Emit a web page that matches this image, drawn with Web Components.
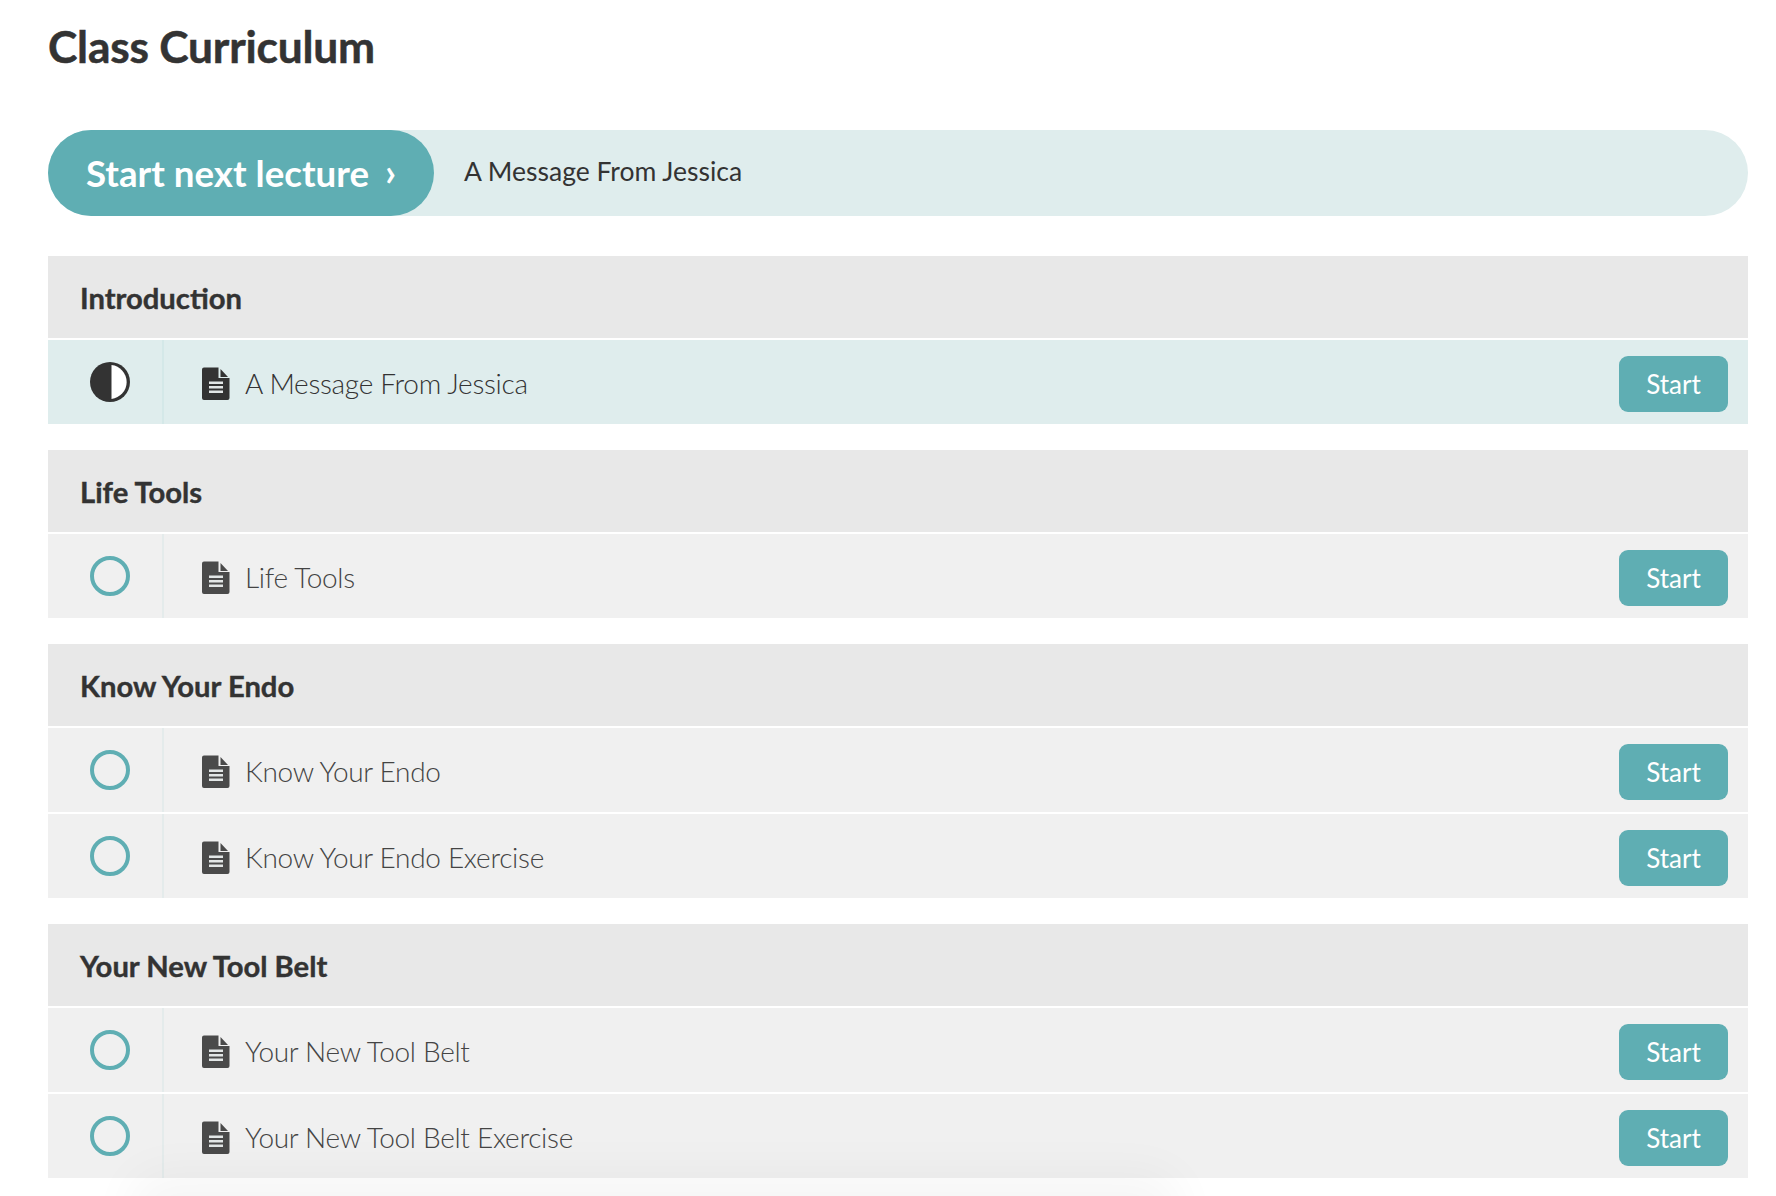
<!DOCTYPE html>
<html>
<head>
<meta charset="utf-8">
<title>Class Curriculum</title>
<style>
  html, body { margin: 0; background: #fff; }
  body { font-family: "Lato", "Noto Sans", sans-serif; color: #333; height: 1196px; overflow: hidden; }
</style>
</head>
<body>
<class-curriculum>
  <span slot="title">Class Curriculum</span>
  <next-lecture>A Message From Jessica</next-lecture>
  <curriculum-section heading="Introduction">
    <lecture-row state="current">A Message From Jessica</lecture-row>
  </curriculum-section>
  <curriculum-section heading="Life Tools">
    <lecture-row>Life Tools</lecture-row>
  </curriculum-section>
  <curriculum-section heading="Know Your Endo">
    <lecture-row>Know Your Endo</lecture-row>
    <lecture-row>Know Your Endo Exercise</lecture-row>
  </curriculum-section>
  <curriculum-section heading="Your New Tool Belt">
    <lecture-row>Your New Tool Belt</lecture-row>
    <lecture-row>Your New Tool Belt Exercise</lecture-row>
  </curriculum-section>
</class-curriculum>

<script>
class ClassCurriculum extends HTMLElement {
  constructor() {
    super();
    this.shadowDOM = this.attachShadow({ mode: 'open' });
  }

  connectedCallback() {
    this.shadowDOM.innerHTML = `
      <style>
        :host { display: block; position: relative; padding: 0 28px 0 48px; height: 1196px; box-sizing: border-box; overflow: hidden; }
        h1 { margin: 0; padding-top: 21px; height: 130px; box-sizing: border-box; font-size: 44.300px; line-height: 50px; font-weight: 700; color: #333; letter-spacing: -0.2px; -webkit-text-stroke: .5px #333; }
        .glow { position: absolute; left: 130px; width: 1050px; top: 1172px; height: 120px; background: #000; opacity: .035; filter: blur(24px); border-radius: 30px; pointer-events: none; }
      </style>
      <h1><slot name="title"></slot></h1>
      <slot></slot>
      <div class="glow"></div>
    `;
  }
}

class NextLecture extends HTMLElement {
  constructor() {
    super();
    this.shadowDOM = this.attachShadow({ mode: 'open' });
  }

  connectedCallback() {
    this.shadowDOM.innerHTML = `
      <style>
        :host { display: flex; align-items: center; height: 86px; border-radius: 43px; background: #dfeded; margin-bottom: 40px; }
        .go { display: flex; align-items: center; justify-content: space-between; box-sizing: border-box; width: 386px; height: 86px; padding: 0 38px; border-radius: 43px; background: #5faeb3; color: #fff; font-size: 36.700px; font-weight: 700; }
        .chev { position: relative; top: -2px; font-size: 38px; }
        .name { padding-left: 30px; font-size: 26.500px; color: #333; position: relative; top: -2px; }
      </style>
      <div class="go"><span>Start next lecture</span><span class="chev">›</span></div>
      <div class="name"><slot></slot></div>
    `;
  }
}

class CurriculumSection extends HTMLElement {
  constructor() {
    super();
    this.shadowDOM = this.attachShadow({ mode: 'open' });
  }

  connectedCallback() {
    this.shadowDOM.innerHTML = `
      <style>
        :host { display: block; margin-bottom: 26px; }
        header { display: flex; align-items: center; height: 82px; padding-left: 32px; background: #e8e8e8; font-size: 29.200px; font-weight: 700; color: #333; -webkit-text-stroke: .4px #333; }
        .rows { display: flex; flex-direction: column; }
      </style>
      <header></header>
      <div class="rows"><slot></slot></div>
    `;
    this.shadowDOM.querySelector('header').textContent = this.getAttribute('heading');
  }
}

class LectureRow extends HTMLElement {
  constructor() {
    super();
    this.shadowDOM = this.attachShadow({ mode: 'open' });
  }

  connectedCallback() {
    const current = this.getAttribute('state') === 'current';
    const ink = current ? '#333' : '#4a4a4a';
    const status = current
      ? `<svg width="40" height="40" viewBox="0 0 40 40"><circle cx="20" cy="20" r="20" fill="#333"/><path d="M21.500 3.100a17 17 0 0 1 0 33.800z" fill="#fff"/></svg>`
      : `<svg width="40" height="40" viewBox="0 0 40 40"><circle cx="20" cy="20" r="18" fill="none" stroke="#5faeb3" stroke-width="4"/></svg>`;
    this.shadowDOM.innerHTML = `
      <style>
        :host { display: flex; align-items: center; height: 84px; margin-top: 2px; background: ${current ? '#dfeded' : '#f0f0f0'}; }
        .status { display: flex; align-items: center; justify-content: center; box-sizing: border-box; width: 116px; height: 100%; padding-left: 10px; border-right: 2px solid rgba(95, 174, 179, .08); }
        .doc { margin-left: 38px; width: 28px; height: 33px; flex: none; position: relative; top: 1px; }
        .name { flex: 1; margin-left: 15px; font-size: 28px; font-weight: 300; letter-spacing: -0.3px; color: ${current ? '#333' : '#444'}; position: relative; top: 1px; }
        .start { display: flex; align-items: center; justify-content: center; width: 109px; height: 56px; margin: 4px 20px 0 0; border-radius: 9px; background: #5faeb3; color: #fff; font-size: 26px; }
        svg { display: block; }
      </style>
      <div class="status">${status}</div>
      <svg class="doc" viewBox="0 0 28 33"><path d="M2 .5h14.500V11H27.500v20a2 2 0 0 1-2 2H2a2 2 0 0 1-2-2V2.500a2 2 0 0 1 2-2z" fill="${ink}"/><path d="M18.500 2l7.500 8h-7.500z" fill="${ink}"/><path d="M7 15.700h14M7 20.200h14M7 24.700h14" stroke="#e2e6e6" stroke-width="2.400"/></svg>
      <div class="name"><slot></slot></div>
      <div class="start">Start</div>
    `;
  }
}

customElements.define('class-curriculum', ClassCurriculum);
customElements.define('next-lecture', NextLecture);
customElements.define('curriculum-section', CurriculumSection);
customElements.define('lecture-row', LectureRow);
</script>
</body>
</html>
